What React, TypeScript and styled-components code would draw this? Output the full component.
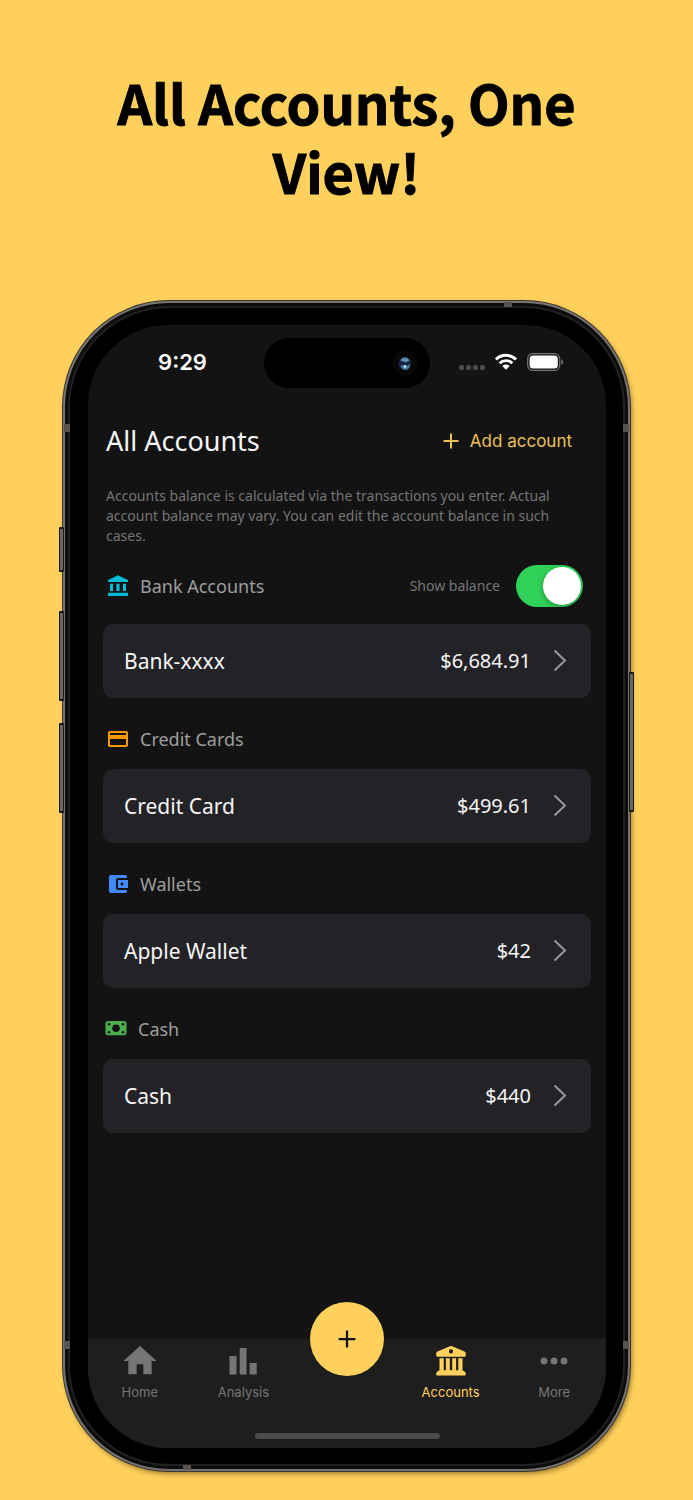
import React, { useId, useState } from 'react';
import styled, { createGlobalStyle } from 'styled-components';
import { MdAccountBalanceWallet, MdCreditCard, MdHome } from 'react-icons/md';

const gold = '#ffd15c';
const muted = '#757575';
const bodyFont = "'Noto Sans', 'Open Sans', sans-serif";
const systemFont = "Inter, 'Liberation Sans', sans-serif";

const GlobalStyle = createGlobalStyle`
  *, *::before, *::after { box-sizing: border-box; }
  body { margin: 0; background: ${gold}; }
  h1, h2, p, ul { margin: 0; padding: 0; }
  button { border: 0; padding: 0; background: none; font: inherit; color: inherit; cursor: pointer; }
  a { color: inherit; text-decoration: none; }
`;

const Page = styled.div`
  min-height: 100vh;
  padding: 67px 63px 28px;
  background: ${gold};
  display: flex;
  flex-direction: column;
  align-items: center;
  gap: 96px;
  overflow: hidden;
`;

const Headline = styled.h1`
  max-width: 520px;
  font: 700 54px/69px 'Noto Sans CJK SC', 'Noto Sans', sans-serif;
  -webkit-text-stroke: 1px #000;
  color: #000;
  text-align: center;
`;

const Phone = styled.div`
  position: relative;
  width: 100%;
  max-width: 640px;
  padding: 3px;
  border-radius: 106px;
  background: #0c0c0c;
  border: 2px solid #77736f;
  box-shadow: 0 0 0 1px #3a3631, 2px 3px 5px rgba(70, 45, 0, 0.5);
`;

const Bezel = styled.div`
  padding: 17px 17px 16px 18px;
  border-radius: 101px;
  background: #000;
  border: 2px solid #222121;
`;

const SideButton = styled.span<{ $side: 'left' | 'right'; $top: number; $length: number }>`
  position: absolute;
  ${(p) => p.$side}: -6px;
  top: ${(p) => p.$top}px;
  width: 5px;
  height: ${(p) => p.$length}px;
  border: solid #1b1918;
  border-width: 2px 1px;
  border-radius: 1px;
  background: #6b6662;
`;

const AntennaBand = styled.span<{ $edge: 'left' | 'right' | 'top' | 'bottom'; $at: string }>`
  position: absolute;
  background: #565350;
  ${(p) =>
    p.$edge === 'left' || p.$edge === 'right'
      ? `${p.$edge}: -1px; top: ${p.$at}; width: 6px; height: 8px;`
      : `${p.$edge}: -1px; left: ${p.$at}; width: 8px; height: 5px;`}
`;

const Screen = styled.div`
  border-radius: 80px;
  background: #131313;
  color: #f5f5f5;
  font-family: ${bodyFont};
  overflow: hidden;
  display: flex;
  flex-direction: column;
`;

const StatusBar = styled.div`
  display: grid;
  grid-template-columns: 1fr 166px 1fr;
  height: 50px;
  margin-top: 13px;
`;

const Time = styled.time`
  padding: 0 0 2px 13px;
  align-self: center;
  text-align: center;
  font: 600 22px/28px ${systemFont};
  color: #fff;
`;

const Island = styled.div`
  border-radius: 25px;
  background: #000;
  display: flex;
  align-items: center;
  justify-content: flex-end;
  padding-right: 12px;
`;

const StatusIcons = styled.div`
  display: flex;
  align-items: center;
  padding: 0 0 3px 29px;
  gap: 10px;
`;

const Main = styled.main`
  padding: 35px 15px 206px;
`;

const TitleRow = styled.div`
  display: flex;
  align-items: center;
  justify-content: space-between;
  padding: 0 19px 0 3px;
  height: 36px;
`;

const Title = styled.h2`
  font-size: 27px;
  line-height: 36px;
  font-weight: 400;
`;

const AddButton = styled.button`
  display: flex;
  align-items: center;
  gap: 11px;
  font: 400 17px/24px ${systemFont};
  color: #ecc257;
`;

const Note = styled.p`
  margin-top: 27px;
  padding: 0 3px;
  font-size: 14px;
  line-height: 20px;
  color: ${muted};
`;

const SectionHead = styled.div<{ $first?: boolean; $tight?: boolean }>`
  display: flex;
  align-items: center;
  gap: 10px;
  height: ${(p) => (p.$first ? 78 : 71)}px;
  padding: ${(p) => (p.$first ? 2 : 10)}px 8px 0 ${(p) => (p.$tight ? 1 : 3)}px;
  color: #9e9e9e;
`;

const SectionName = styled.h2`
  flex: 1;
  font-size: 18px;
  line-height: 24px;
  font-weight: 400;
`;

const SwitchLabel = styled.label`
  display: flex;
  align-items: center;
  gap: 16px;
  font-size: 14px;
  line-height: 20px;
  color: ${muted};
  cursor: pointer;
`;

const Switch = styled.input`
  appearance: none;
  margin: 0;
  width: 67px;
  height: 42px;
  padding: 2px;
  border-radius: 21px;
  background: #39393d;
  display: flex;
  cursor: pointer;
  &::before {
    content: '';
    width: 38px;
    height: 38px;
    border-radius: 50%;
    background: #fff;
    box-shadow: 0 2px 6px rgba(0, 0, 0, 0.3);
  }
  &:checked {
    background: #30d158;
    justify-content: flex-end;
  }
`;

const AccountCard = styled.button`
  display: flex;
  align-items: center;
  width: 100%;
  height: 74px;
  padding: 0 24px 0 21px;
  border-radius: 10px;
  background: #232227;
  color: #f5f5f5;
  text-align: left;
  line-height: 28px;
`;

const AccountName = styled.span`
  flex: 1;
  font-size: 21px;
`;

const Amount = styled.span`
  font-size: 20px;
  margin-right: 22px;
`;

const TabBar = styled.nav`
  position: relative;
  height: 109px;
  background: #1e1e1e;
  display: flex;
  flex-direction: column;
  justify-content: space-between;
  align-items: center;
  padding-bottom: 9px;
`;

const Tabs = styled.ul`
  width: 100%;
  list-style: none;
  display: grid;
  grid-template-columns: repeat(5, 1fr);
  padding-top: 2px;
`;

const Tab = styled.a<{ $active?: boolean }>`
  display: flex;
  flex-direction: column;
  align-items: center;
  gap: 1px;
  font: 400 13px/20px ${systemFont};
  color: ${(p) => (p.$active ? gold : muted)};
  svg { display: block; }
`;

const AddFab = styled.button`
  position: absolute;
  left: 50%;
  top: 0;
  transform: translate(-50%, -50%);
  width: 74px;
  height: 74px;
  border-radius: 50%;
  background: ${gold};
  display: grid;
  place-items: center;
`;

const HomeIndicator = styled.div`
  width: 185px;
  height: 6px;
  border-radius: 3px;
  background: #4b4b4b;
`;

const Plus = ({ size, weight, color }: { size: number; weight: number; color: string }) => (
  <svg width={size} height={size} viewBox="0 0 16 16" fill="none" stroke={color} strokeWidth={weight} aria-hidden>
    <path d="M8 0.5v15M0.5 8h15" />
  </svg>
);

const Chevron = () => (
  <svg width="14" height="24" viewBox="0 0 14 24" fill="none" stroke="#98989c" strokeWidth="2" aria-hidden>
    <path d="M1.500 1.500 12 11.500 1.500 21.500" />
  </svg>
);

const BankIcon = () => (
  <svg width="24" height="24" viewBox="0 0 24 24" fill="#00bcd4" aria-hidden>
    <path d="M12 1.3 22 6v2H2V6zM4 9.7h3V17H4zM10.4 9.7h3.2V17h-3.2zM17 9.7h3V17h-3zM2 18.7h20V22H2z" />
  </svg>
);

const CashIcon = () => (
  <svg width="24" height="24" viewBox="0 0 24 24" aria-hidden>
    <rect x="1.500" y="4" width="21" height="14.300" rx="2.600" fill="#4caf50" />
    <g fill="#131313">
      <circle cx="12" cy="11.200" r="3.800" />
      <circle cx="5" cy="7.200" r="1.300" />
      <circle cx="19" cy="7.200" r="1.300" />
      <circle cx="5" cy="15.200" r="1.300" />
      <circle cx="19" cy="15.200" r="1.300" />
    </g>
  </svg>
);

const AnalysisIcon = () => (
  <svg width="40" height="40" viewBox="0 0 40 40" fill="currentColor" aria-hidden>
    <path d="M6.500 15h7v18.500h-7zM16.700 7h6.800v26.500h-6.800zM26.700 22h7v11.500h-7z" />
  </svg>
);

const LandmarkIcon = () => (
  <svg width="40" height="40" viewBox="0 0 40 40" fill="currentColor" aria-hidden>
    <path
      fillRule="evenodd"
      d="M18.800 5.300q1.200-.5 2.400 0l12.300 5.200q1.300.6 1.300 1.900v1.900q0 1.500-1.500 1.500H6.700q-1.500 0-1.500-1.500v-1.900q0-1.300 1.300-1.900zM20 8.300a2.100 2.100 0 1 0 0 4.200 2.100 2.100 0 0 0 0-4.200z"
    />
    <path d="M8.500 17.300h4.200v12h2.200v-12h3.900v12h2.400v-12h3.900v12h2.200v-12h4.200v12l2 1.200q1.300.8 1.300 2v.8q0 1.200-1.200 1.200H6.400q-1.200 0-1.200-1.200v-.8q0-1.200 1.300-2l2-1.200z" />
  </svg>
);

const MoreIcon = () => (
  <svg width="40" height="40" viewBox="0 0 40 40" fill="currentColor" aria-hidden>
    <circle cx="10" cy="20" r="3.500" />
    <circle cx="20" cy="20" r="3.500" />
    <circle cx="30" cy="20" r="3.500" />
  </svg>
);

const CameraLens = () => (
  <svg width="26" height="26" viewBox="0 0 26 26" aria-hidden>
    <circle cx="13" cy="13" r="12.500" fill="#080809" />
    <circle cx="13" cy="13.500" r="6.500" fill="#18243a" />
    <path d="M8.500 11q1-4 5-3.500 3 .5 4 3l-4 2q-2-2-5-1.500z" fill="#5b8cba" />
    <path d="M8.500 15.500q4-1 5.500 1l3.500-2.500q1 5-4 6-4-.5-5-4.500z" fill="#457aa6" />
    <circle cx="13" cy="16.500" r="1.400" fill="#b5e4f2" />
  </svg>
);

const SignalDots = () => (
  <svg width="26" height="26" viewBox="0 0 26 26" fill="#4a4a4a" aria-hidden>
    {[0, 7, 14, 21].map((x) => (
      <rect key={x} x={x} y="16" width="5" height="5" rx="1.500" />
    ))}
  </svg>
);

const WifiIcon = () => (
  <svg width="22" height="18" viewBox="0 0 22 18" aria-hidden>
    <g fill="none" stroke="#fff" strokeWidth="2.900">
      <path d="M1 6.400a14.300 14.300 0 0 1 20 0" />
      <path d="M4.700 10.200a9 9 0 0 1 12.600 0" />
    </g>
    <path d="M7.300 12.900a5.400 5.400 0 0 1 7.400 0L11 16.800z" fill="#fff" />
  </svg>
);

const BatteryIcon = () => (
  <svg width="37" height="18" viewBox="0 0 37 18" aria-hidden>
    <rect x="0.700" y="0.700" width="32" height="16.600" rx="5" fill="none" stroke="#77777a" strokeWidth="1.200" />
    <rect x="2.600" y="2.600" width="28.200" height="12.800" rx="3.500" fill="#fff" />
    <path d="M34.300 6.400q2 .8 2 2.600t-2 2.600z" fill="#77777a" />
  </svg>
);

type Section = {
  name: string;
  icon: React.ReactNode;
  account: string;
  amount: string;
  tight?: boolean;
};

const sections: Section[] = [
  { name: 'Bank Accounts', icon: <BankIcon />, account: 'Bank-xxxx', amount: '$6,684.91' },
  { name: 'Credit Cards', icon: <MdCreditCard size={24} color="#ff9800" />, account: 'Credit Card', amount: '$499.61' },
  { name: 'Wallets', icon: <MdAccountBalanceWallet size={24} color="#448aff" />, account: 'Apple Wallet', amount: '$42' },
  { name: 'Cash', icon: <CashIcon />, account: 'Cash', amount: '$440', tight: true },
];

export default function App() {
  const [showBalance, setShowBalance] = useState(true);
  const switchId = useId();

  return (
    <>
      <GlobalStyle />
      <Page>
        <Headline>All Accounts, One View!</Headline>
        <Phone>
          <SideButton $side="left" $top={224} $length={45} />
          <SideButton $side="left" $top={308} $length={90} />
          <SideButton $side="left" $top={420} $length={90} />
          <SideButton $side="right" $top={369} $length={140} />
          <AntennaBand $edge="left" $at="121px" />
          <AntennaBand $edge="right" $at="121px" />
          <AntennaBand $edge="left" $at="1038px" />
          <AntennaBand $edge="right" $at="1038px" />
          <AntennaBand $edge="top" $at="78%" />
          <AntennaBand $edge="bottom" $at="21%" />
          <Bezel>
            <Screen>
              <StatusBar>
                <Time>9:29</Time>
                <Island>
                  <CameraLens />
                </Island>
                <StatusIcons>
                  <SignalDots />
                  <WifiIcon />
                  <BatteryIcon />
                </StatusIcons>
              </StatusBar>
              <Main>
                <TitleRow>
                  <Title>All Accounts</Title>
                  <AddButton type="button">
                    <Plus size={16} weight={2} color="#ecc257" />
                    Add account
                  </AddButton>
                </TitleRow>
                <Note>
                  Accounts balance is calculated via the transactions you enter. Actual account balance may vary. You
                  can edit the account balance in such cases.
                </Note>
                {sections.map((section, index) => (
                  <section key={section.name}>
                    <SectionHead $first={index === 0} $tight={section.tight}>
                      {section.icon}
                      <SectionName>{section.name}</SectionName>
                      {index === 0 && (
                        <SwitchLabel htmlFor={switchId}>
                          Show balance
                          <Switch
                            id={switchId}
                            type="checkbox"
                            role="switch"
                            checked={showBalance}
                            onChange={(event) => setShowBalance(event.target.checked)}
                          />
                        </SwitchLabel>
                      )}
                    </SectionHead>
                    <AccountCard type="button">
                      <AccountName>{section.account}</AccountName>
                      {showBalance && <Amount>{section.amount}</Amount>}
                      <Chevron />
                    </AccountCard>
                  </section>
                ))}
              </Main>
              <TabBar>
                <Tabs>
                  <li>
                    <Tab href="#home">
                      <MdHome size={40} />
                      Home
                    </Tab>
                  </li>
                  <li>
                    <Tab href="#analysis">
                      <AnalysisIcon />
                      Analysis
                    </Tab>
                  </li>
                  <li />
                  <li>
                    <Tab href="#accounts" $active aria-current="page">
                      <LandmarkIcon />
                      Accounts
                    </Tab>
                  </li>
                  <li>
                    <Tab href="#more">
                      <MoreIcon />
                      More
                    </Tab>
                  </li>
                </Tabs>
                <AddFab type="button" aria-label="Add transaction">
                  <Plus size={18} weight={2} color="#111" />
                </AddFab>
                <HomeIndicator />
              </TabBar>
            </Screen>
          </Bezel>
        </Phone>
      </Page>
    </>
  );
}
